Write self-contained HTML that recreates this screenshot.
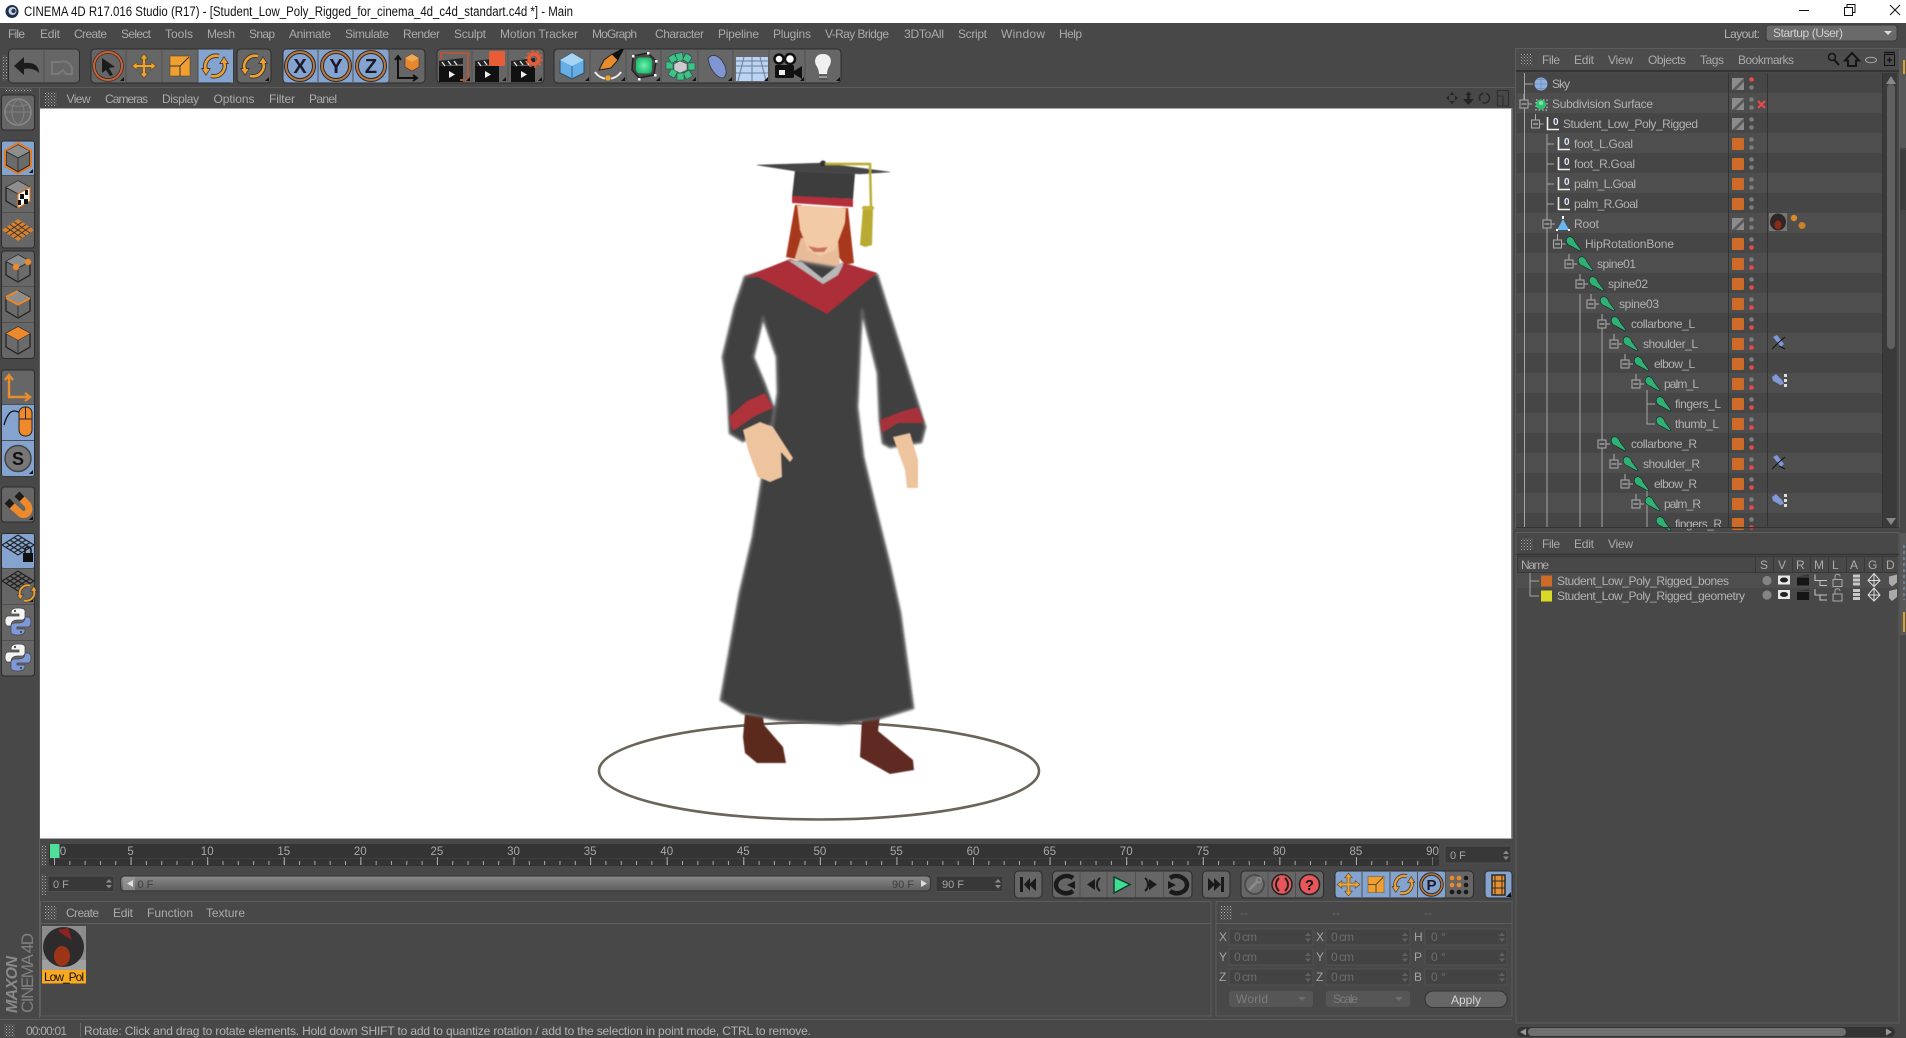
<!DOCTYPE html>
<html><head><meta charset="utf-8"><title>CINEMA 4D</title>
<style>
html,body{margin:0;padding:0;background:#484848;overflow:hidden}
svg{display:block}
text{font-family:"Liberation Sans",sans-serif;font-size:12px;fill:#ababab}
.o{fill:#b2b2b2}
.d{fill:#6c6c6c}
.l{fill:#a4a4a4}
.f{font-size:11px;fill:#a4a4a4}
.r{font-size:11.5px;fill:#a8a8a8}
.n{font-size:10px;font-weight:bold;fill:#dbe8ff}
</style></head><body>
<svg width="1906" height="1038" viewBox="0 0 1906 1038" xmlns="http://www.w3.org/2000/svg">
<defs>
<pattern id="grip" width="3" height="3" patternUnits="userSpaceOnUse"><rect width="3" height="3" fill="#444"/><rect width="1" height="1" fill="#b0b0b0"/><rect x="1.5" y="1.5" width="1" height="1" fill="#999"/></pattern>
<pattern id="rows" width="40" height="40" y="73" patternUnits="userSpaceOnUse"><rect width="40" height="20" fill="#464646"/><rect y="20" width="40" height="20" fill="#4e4e4e"/></pattern>
<g id="mv"><path d="M0-12L4-7H1.5V-1.5H7V-4L12 0L7 4V1.5H1.5V7H4L0 12L-4 7H-1.5V1.5H-7V4L-12 0L-7-4V-1.5H-1.5V-7H-4Z" fill="#f2a52e" stroke="#5a4a2a" stroke-width=".7"/></g>
<g id="sc"><rect x="-10" y="-10" width="20" height="20" fill="#f0a030" stroke="#5a4a2a" stroke-width=".6"/><path d="M-10 0H0V10M0 0L9-9" fill="none" stroke="#333" stroke-width="1"/></g>
<g id="rt"><path d="M4-10C-6-12-12-3-9 4M-4 10C6 12 12 3 9-4" fill="none" stroke="#3a3a3a" stroke-width="4.500"/><path d="M-14 2L-4 2L-9 10ZM14-2L4-2L9-10Z" fill="#3a3a3a"/><path d="M4-10C-6-12-12-3-9 4M-4 10C6 12 12 3 9-4" fill="none" stroke="#f0a030" stroke-width="2.600"/><path d="M-12.500 3L-5.500 3L-9 8.500ZM12.500-3L5.500-3L9-8.500Z" fill="#f0a030"/></g>
<g id="cube"><path d="M0-13L12-6.500V7L0 14L-12 7V-6.500Z" fill="#6b6b6b" stroke="#222" stroke-width="1.300"/><path d="M0-13L12-6.500L0 0L-12-6.500Z" fill="#8e8e8e"/><path d="M0 0V14M0 0L12-6.500M0 0L-12-6.500" stroke="#333" stroke-width="1" fill="none"/></g>
<g id="clap"><rect x="-13" y="-3" width="24" height="16" fill="#111"/><path d="M-13-8L11-11V-5L-13-3Z" fill="#222"/><path d="M-10-7l3 4M-4-8l3 4M2-8l3 4" stroke="#ddd" stroke-width="1.4"/><path d="M-3 2L3 5.500L-3 9Z" fill="#eee"/></g>
<g id="py"><path d="M0-13C-7-13-7-10-7-7H1V-5H-10C-14-5-14 5-10 5H-7C-7 0-3-1 0-1H4C6-1 7-3 7-4V-10C7-12 4-13 0-13Z" fill="#f4f4f4" stroke="#444" stroke-width=".7"/><path d="M0 14C7 14 7 11 7 8H-1V6H10C14 6 14-4 10-4H7C7 1 4 2 0 2H-4C-6 2-7 4-7 5V11C-7 13-4 14 0 14Z" fill="#7f98d8" stroke="#444" stroke-width=".7"/><circle cx="-3" cy="-10" r="1.100" fill="#444"/><circle cx="3" cy="11" r="1.100" fill="#444"/></g>
<g id="grid"><path d="M0-10L16 0L0 10L-16 0Z" fill="none" stroke="#1f1f1f" stroke-width="1.100"/><path d="M-8-5L8 5M-4-7.500L12 2.500M-12-2.500L4 7.500M8-5L-8 5M4-7.500L-12 2.500M12-2.500L-4 7.500" stroke="#1f1f1f" stroke-width="1.100"/></g>
<g id="sqo"><rect width="12" height="12" rx="1" fill="#ce6b28"/></g>
<g id="sqg"><rect width="12" height="12" fill="#8c8c8c"/><path d="M0 12L12 0V4L4 12Z" fill="#5c5c5c"/></g>
<g id="dg"><circle cy="-4.500" r="2.300" fill="#7c7c7c"/><circle cy="3.500" r="2.300" fill="#7c7c7c"/></g>
<g id="dr"><circle cy="-4.500" r="2.300" fill="#7c7c7c"/><circle cy="3.500" r="2.300" fill="#e84a4a"/></g>
<g id="bx"><path d="M0-4V-10M4 0H8M-2.500 0H2.500" stroke="#aeaeae" fill="none"/><rect x="-4" y="-4" width="8" height="8" fill="#4a4a4a" stroke="#aeaeae"/><path d="M-2.500 0H2.500" stroke="#c8c8c8"/></g>
<g id="bn"><path d="M0-6C3-9 7-6 8-2L14 6L13 7L4 2C0 1-2-3 0-6Z" fill="#2fb270" stroke="#123" stroke-width=".6"/></g>
<g id="nl"><path d="M1.500-7V5.500H13" fill="none" stroke="#f0f0f0" stroke-width="1.600"/></g>
<g id="tg"><path d="M1-6L5-8L12 1L9 4Z" fill="#7f98d8"/><path d="M0 6L6 0L13-6M7 3L13 6" stroke="#111" stroke-width="1" fill="none"/></g>
<g id="tp"><path d="M0-5L4-8L10-2L12 2L8 3L5 1L1-1Z" fill="#7f98d8"/><rect x="12" y="-8" width="3" height="3" fill="#ddd"/><rect x="12" y="-3" width="3" height="3" fill="#ddd"/><rect x="12" y="2" width="3" height="3" fill="#ddd"/></g>
<g id="lic"><circle cx="1767" r="4.600" fill="#848484"/><rect x="1778" y="-5" width="12" height="9" fill="#e8e8e8"/><ellipse cx="1784" cy="-.5" rx="4" ry="2.500" fill="#222"/><rect x="1797" y="-3" width="12" height="8" fill="#151515"/><path d="M1797-4l12-2v2h-12z" fill="#333"/><path d="M1815-6V0H1827M1820 0V5H1827" fill="none" stroke="#c4c4c4"/><rect x="1833" y="-1" width="9" height="7" fill="none" stroke="#aaa"/><path d="M1835-1V-4C1835-7 1840-7 1840-4" fill="none" stroke="#aaa"/><path d="M1853-6h7v3h-7zM1853-2h7v3h-7zM1853 2h7v3h-7z" fill="#c8c8c8"/><path d="M1874-7L1880 0L1874 6L1868 0Z" fill="none" stroke="#ddd"/><path d="M1868 0H1880M1874-7V6" stroke="#ddd"/><path d="M1889-4L1897-6V2L1892 6L1889 3Z" fill="#aaa"/></g>
<g id="spin"><path d="M-3-1L0-4.500L3-1ZM-3 1.500L0 5L3 1.500Z" fill="#8a8a8a"/></g>
<g id="spd"><path d="M-3-1L0-4.500L3-1ZM-3 1.500L0 5L3 1.500Z" fill="#626262"/></g>
<filter id="soft" x="-5%" y="-5%" width="110%" height="110%"><feGaussianBlur stdDeviation="1.100"/></filter>
<filter id="soft2" x="-5%" y="-5%" width="110%" height="110%"><feGaussianBlur stdDeviation=".5"/></filter>
<linearGradient id="sl" x1="0" y1="0" x2="0" y2="1"><stop offset="0" stop-color="#8a8a8a"/><stop offset="1" stop-color="#5c5c5c"/></linearGradient>
<radialGradient id="grn"><stop offset="0" stop-color="#6ef0b0"/><stop offset="1" stop-color="#22c070"/></radialGradient>
</defs>

<!-- base -->
<rect width="1906" height="1038" fill="#484848"/>
<rect width="1906" height="23" fill="#fff"/>
<circle cx="12" cy="11.500" r="6.500" fill="#20304a"/><circle cx="12.500" cy="11" r="4" fill="#c8d4e6"/><circle cx="13.500" cy="11" r="2.200" fill="#2a3a56"/>
<text x="24" y="16" textLength="549" lengthAdjust="spacingAndGlyphs" style="font-size:13.500px;fill:#111">CINEMA 4D R17.016 Studio (R17) - [Student_Low_Poly_Rigged_for_cinema_4d_c4d_standart.c4d *] - Main</text>
<path d="M1799 10.500H1809" stroke="#111"/><path d="M1844.500 7.500H1852.500V15.500H1844.500ZM1847 7V4.500H1855V12.500H1853" fill="none" stroke="#111"/><path d="M1890 5L1900 15M1900 5L1890 15" stroke="#111"/>

<!-- menu -->
<g>
<text x="8" y="38" textLength="17">File</text><text x="40" y="38" textLength="20">Edit</text><text x="74" y="38" textLength="33">Create</text><text x="121" y="38" textLength="30">Select</text><text x="165" y="38" textLength="28">Tools</text><text x="207" y="38" textLength="28">Mesh</text><text x="249" y="38" textLength="26">Snap</text><text x="289" y="38" textLength="42">Animate</text><text x="345" y="38" textLength="44">Simulate</text><text x="403" y="38" textLength="37">Render</text><text x="454" y="38" textLength="32">Sculpt</text><text x="500" y="38" textLength="78">Motion Tracker</text><text x="592" y="38" textLength="45">MoGraph</text><text x="655" y="38" textLength="49">Character</text><text x="718" y="38" textLength="41">Pipeline</text><text x="773" y="38" textLength="38">Plugins</text><text x="825" y="38" textLength="64">V-Ray Bridge</text><text x="904" y="38" textLength="40">3DToAll</text><text x="958" y="38" textLength="29">Script</text><text x="1001" y="38" textLength="44">Window</text><text x="1059" y="38" textLength="23">Help</text>
</g>
<text x="1724" y="38" textLength="36" class="o">Layout:</text>
<rect x="1766" y="25" width="131" height="16" rx="3" fill="#6a6a6a" stroke="#3a3a3a"/>
<text x="1773" y="37" textLength="70" style="fill:#d0d0d0">Startup (User)</text>
<path d="M1884 31H1892L1888 35Z" fill="#ddd"/>

<!-- top toolbar -->
<rect x="2" y="55" width="5" height="26" fill="url(#grip)"/>
<g stroke="#2c2c2c" fill="#666">
<rect x="8.500" y="49" width="71" height="34" rx="4"/><rect x="91" y="49" width="142" height="34" rx="4"/><rect x="237" y="49" width="34" height="34" rx="4"/><rect x="283" y="49" width="142" height="34" rx="4"/><rect x="437" y="49" width="107" height="34" rx="4"/><rect x="554" y="49" width="287" height="34" rx="4"/>
</g>
<rect x="198" y="49.500" width="35" height="33" fill="#84a3cf"/>
<rect x="283.500" y="49.500" width="105" height="33" rx="3" fill="#84a3cf"/>
<path d="M44 50V82M126 50V82M162 50V82M198 50V82M318 50V82M353 50V82M389 50V82M472 50V82M508 50V82M590 50V82M626 50V82M661 50V82M698 50V82M733 50V82M769 50V82M805 50V82" stroke="#505050"/>
<path d="M14 66L24 57V63C33 62 39 65 39 73C35 69 30 68 24 69V75Z" fill="#1c1c1c"/>
<g opacity=".55"><path d="M52 74V62H60C64 60 70 62 72 68V74H66L63 70L58 74Z" fill="none" stroke="#8a8a8a" stroke-width="2"/></g>
<circle cx="108" cy="66" r="14" fill="none" stroke="#3a2a22" stroke-width="3.500"/><circle cx="108" cy="66" r="14" fill="none" stroke="#c9623a" stroke-width="2"/>
<path d="M102 58L115 67L109 68L113 75L110 76L106 70L102 73Z" fill="#1c1c1c"/>
<path d="M124 81H120L124 77Z" fill="#111"/>
<use href="#mv" x="144" y="66"/><use href="#sc" x="180" y="66"/><use href="#rt" x="215" y="66"/><use href="#rt" x="254" y="66"/>
<path d="M269 81H265L269 77Z" fill="#111"/>
<g fill="none"><circle cx="300" cy="66" r="14" stroke="#2a2a2a" stroke-width="4"/><circle cx="300" cy="66" r="14" stroke="#b97840" stroke-width="2"/><circle cx="336" cy="66" r="14" stroke="#2a2a2a" stroke-width="4"/><circle cx="336" cy="66" r="14" stroke="#b97840" stroke-width="2"/><circle cx="371" cy="66" r="14" stroke="#2a2a2a" stroke-width="4"/><circle cx="371" cy="66" r="14" stroke="#b97840" stroke-width="2"/></g>
<text x="300" y="73" text-anchor="middle" style="font-size:20px;font-weight:bold;fill:#1a1a2a">X</text><text x="336" y="73" text-anchor="middle" style="font-size:20px;font-weight:bold;fill:#1a1a2a">Y</text><text x="371" y="73" text-anchor="middle" style="font-size:20px;font-weight:bold;fill:#1a1a2a">Z</text>
<path d="M398 56V78H417M395 60L398 56L401 60M413 75L417 78L413 81" fill="none" stroke="#111" stroke-width="2"/>
<path d="M405 58L412 54L419 58V67L412 71L405 67Z" fill="#e8872c" stroke="#333" stroke-width=".6"/><path d="M405 58L412 62L419 58L412 54Z" fill="#f0a850"/>
<use href="#clap" x="452" y="69"/><path d="M441 60V53H468V80H460" fill="none" stroke="#b0563a" stroke-width="2"/>
<use href="#clap" x="488" y="69"/><rect x="489" y="51" width="16" height="15" rx="1.500" fill="#e85d35"/>
<use href="#clap" x="524" y="69"/><circle cx="534" cy="59" r="5" fill="none" stroke="#e85d35" stroke-width="3.500"/><circle cx="534" cy="59" r="8" fill="none" stroke="#e85d35" stroke-width="1.500" stroke-dasharray="2.500 2.500"/>
<path d="M470 81H466L470 77ZM506 81H502L506 77ZM542 81H538L542 77Z" fill="#111"/>
<!-- object row -->
<path d="M572 53L584 60V73L572 79L560 73V60Z" fill="#66aee4" stroke="#2b4a66"/><path d="M572 53L584 60L572 66L560 60Z" fill="#a8d4f4"/><path d="M572 66V79" stroke="#2b6a96"/>
<path d="M595 72C601 81 615 81 621 72" fill="none" stroke="#eee" stroke-width="2"/><circle cx="608" cy="78" r="3" fill="#f0a030" stroke="#555" stroke-width=".5"/>
<path d="M599 70L604 60L612 54L618 60L611 68Z" fill="#e88c2c" stroke="#222"/><path d="M612 54L621 49H624L622 53L618 60Z" fill="#111"/>
<path d="M633 56L648 53L656 61L654 75L639 78L632 70Z" fill="#4a4a4a" stroke="#222" stroke-width="1.500"/><rect x="636" y="57.500" width="16" height="16" rx="4" fill="url(#grn)"/>
<g fill="#fff"><rect x="632" y="55" width="2.500" height="2.500"/><rect x="647" y="52" width="2.500" height="2.500"/><rect x="655" y="60" width="2.500" height="2.500"/><rect x="654" y="74" width="2.500" height="2.500"/><rect x="638" y="78" width="2.500" height="2.500"/></g>
<g fill="#3ec480" stroke="#145" stroke-width=".5"><rect x="676" y="53" width="7" height="8" transform="rotate(-10 680 57)"/><rect x="684" y="55" width="7" height="7" transform="rotate(30 688 58)"/><rect x="688" y="63" width="7" height="7"/><rect x="684" y="71" width="7" height="7" transform="rotate(-30 688 74)"/><rect x="677" y="73" width="7" height="7"/><rect x="669" y="70" width="7" height="7" transform="rotate(30 673 74)"/><rect x="666" y="62" width="7" height="7"/><rect x="669" y="55" width="7" height="7" transform="rotate(-30 673 58)"/></g><path d="M680 61L687 64V70L680 73L674 70V64Z" fill="#ccc" stroke="#555" stroke-width=".6"/>
<path d="M708 59C712 52 720 56 724 64C727 70 727 76 723 78C717 78 713 72 710 66Z" fill="#8095d4" stroke="#333" stroke-width=".8"/>
<rect x="736" y="57" width="32" height="24" fill="#bcd4f4"/><path d="M736 61H768M736 66H768M736 73H768M744 57L738 81M752 57V81M760 57L766 81" stroke="#6c7e92"/>
<circle cx="779" cy="59" r="4.500" fill="#fff" stroke="#111" stroke-width="2.500"/><circle cx="790" cy="59" r="5" fill="#fff" stroke="#111" stroke-width="2.500"/><rect x="775" y="65" width="19" height="13" rx="1.500" fill="#111"/><path d="M794 71L802 66V79L794 74Z" fill="#111"/><rect x="779" y="70" width="6" height="5" fill="#eee"/>
<path d="M823 54C815 54 814 61 816 65C818 68 819 71 819 74H827C827 71 828 68 830 65C832 61 831 54 823 54Z" fill="#f0f0f0"/><path d="M819 75H827V80H819Z" fill="#555"/><path d="M819 77H827" stroke="#ddd"/>
<path d="M589 81H585L589 77ZM625 81H621L625 77ZM660 81H656L660 77ZM696 81H692L696 77ZM732 81H728L732 77ZM768 81H764L768 77ZM804 81H800L804 77ZM840 81H836L840 77Z" fill="#111"/>

<path d="M0 87.500H1515" stroke="#5c5c5c"/>
<!-- left toolbar -->
<rect x="5" y="88" width="27" height="4" fill="url(#grip)"/>
<path d="M39.500 88V1018" stroke="#606060"/>
<g stroke="#2c2c2c" fill="#666"><rect x="1.500" y="95" width="33" height="35" rx="3"/><rect x="1.500" y="141" width="33" height="107" rx="3"/><rect x="1.500" y="251" width="33" height="107.500" rx="3"/><rect x="1.500" y="370" width="33" height="106" rx="3"/><rect x="1.500" y="487" width="33" height="35" rx="3"/><rect x="1.500" y="533.500" width="33" height="142.500" rx="3"/></g>
<rect x="2" y="141.500" width="32" height="34" rx="2" fill="#84a3cf"/><rect x="2" y="404" width="32" height="72" rx="2" fill="#84a3cf"/><rect x="2" y="534" width="32" height="34" rx="2" fill="#84a3cf"/>
<path d="M2 175.500H34M2 212.500H34M2 286.500H34M2 322.500H34M2 404.500H34M2 440.500H34M2 568.500H34M2 604.500H34M2 640.500H34" stroke="#505050"/>
<circle cx="18" cy="112" r="13" fill="none" stroke="#888" stroke-width="1.500"/><path d="M18 99C10 105 10 119 18 125C26 119 26 105 18 99M5 112H31M8 104C14 107 22 107 28 104" fill="none" stroke="#808080"/>
<use href="#cube" x="18" y="158"/><path d="M18 143L31 150.500V166L18 173.500L5 166V150.500Z" fill="none" stroke="#e07c28" stroke-width="2"/>
<use href="#cube" x="18" y="194"/><path d="M18 194L30 187.500V201L18 208Z" fill="#fff" stroke="#e07c28" stroke-width="1.200"/><path d="M20 194h4v5h-4zM24 199h4v5h-4zM18 200h3v5h-3zM25 190h3v5h-3z" fill="#111"/>
<path d="M18 219L34 230L18 241L2 230Z" fill="#d68130"/><path d="M10 224.500L26 235.500M14 222L30 233M6 227L22 238M26 224.500L10 235.500M22 222L6 233M30 227L14 238" stroke="#333" stroke-width=".8"/>
<use href="#cube" x="18" y="268"/><circle cx="16" cy="267" r="3.200" fill="#ee8a2c"/><circle cx="28" cy="262" r="3.200" fill="#ee8a2c"/>
<use href="#cube" x="18" y="304"/><path d="M6 298L18 304.500L30 298M6 297L18 291" fill="none" stroke="#ee8a2c" stroke-width="2"/>
<use href="#cube" x="18" y="340"/><path d="M18 327L30 333.500L18 340L6 333.500Z" fill="#ee8a2c"/>
<path d="M9 376V397H28M5 380L9 375L13 380M25 393L30 397L25 401" fill="none" stroke="#e88c2c" stroke-width="2.400"/>
<path d="M4 425C9 407 16 410 22 414" fill="none" stroke="#111" stroke-width="1.300"/><rect x="19" y="407" width="13" height="29" rx="6" fill="#ee8a2c" stroke="#222"/><path d="M19 419H32M25.500 407V419" stroke="#222"/>
<circle cx="18" cy="458.500" r="13" fill="#777" stroke="#444" stroke-width="1.500"/><text x="18" y="465" text-anchor="middle" style="font-size:18px;font-weight:bold;fill:#111">S</text>
<path d="M9 503L20 513C26 518 32 510 27 504L19 496" fill="none" stroke="#ee8a2c" stroke-width="7"/><path d="M7 501L12 506M17 494L22 499" stroke="#1c1c1c" stroke-width="7"/>
<path d="M33 520H29L33 516ZM33 173H29L33 169ZM33 474H29L33 470ZM33 602H29L33 598Z" fill="#111"/>
<use href="#grid" x="18" y="545"/><rect x="23" y="553" width="10" height="9" fill="#111"/><path d="M25 553V550C25 546 31 546 31 550V553" fill="none" stroke="#111" stroke-width="1.500"/>
<use href="#grid" x="18" y="581"/><use href="#rt" transform="translate(27 593) scale(.75)"/>
<use href="#py" x="18" y="621"/><use href="#py" x="18" y="657"/>

<!-- view menu -->
<rect x="45" y="92" width="12" height="14" fill="url(#grip)"/>
<g><text x="66.500" y="103" textLength="24">View</text><text x="105" y="103" textLength="43">Cameras</text><text x="162" y="103" textLength="37">Display</text><text x="213.500" y="103" textLength="41">Options</text><text x="269" y="103" textLength="26">Filter</text><text x="309" y="103" textLength="28">Panel</text></g>
<path d="M1446 98L1449 95.500V100.500ZM1458 98L1455 95.500V100.500ZM1452 92L1449.500 95H1454.500ZM1452 104L1449.500 101H1454.500Z" fill="#242424"/>
<path d="M1468.500 94V100" stroke="#242424" stroke-width="2.500"/><path d="M1468.500 91.500L1465.500 95H1471.500ZM1463 99H1474L1468.500 105Z" fill="#242424"/>
<circle cx="1484.500" cy="98" r="5" fill="none" stroke="#2a2a2a" stroke-width="1.600" stroke-dasharray="10 2.500"/>
<path d="M1497.500 90.500H1508.500V106H1497.500ZM1497.500 96H1503V106" fill="none" stroke="#2e2e2e" stroke-width="1.100"/>

<!-- viewport -->
<path d="M40 108.500H1511" stroke="#a8a8a8"/>
<rect x="40" y="109" width="1471" height="729" fill="#fff"/>
<rect x="40" y="838" width="1471" height="1" fill="#a8a8a8"/>
<rect x="1511" y="108" width="1.500" height="731" fill="#8a8a8a"/>

<!-- figure -->
<ellipse cx="819" cy="771" rx="220" ry="48.500" fill="#fff" stroke="#6b6459" stroke-width="2.600"/>
<g filter="url(#soft2)">
<path d="M745 714L763 716L764 725L783 747L786 763L757 763L745 753L743 737Z" fill="#5c2a1f"/>
<path d="M862 718L880 716L878 731L913 760L914 770L890 774L860 757Z" fill="#5e2c21"/>
<path d="M795 205L786 257L800 260L806 240L801 205Z" fill="#a8391c"/>
<path d="M842 208L848 208L854 263L845 265L833 250Z" fill="#a8391c"/>
<path d="M801 238L838 242L840 266L820 276L795 258Z" fill="#e8bc98"/>
</g>
<!-- gown: one merged silhouette -->
<g filter="url(#soft)">
<path d="M745 277L735 307L723 357L728 393L730 433L743 441L772 424L774 410L764 383L753 357L763 317L777 357L778 393L772 430L762 480L753 537L740 593L721 700L743 713L780 720L840 724L880 718L913 708L900 613L890 567L875 507L863 457L857 407L860 340L862 310L878 373L880 420L883 443L890 447L921 442L925 427L903 357L887 307L877 275L800 262Z" fill="#404040" stroke="#5e5e5e" stroke-width="2.600" stroke-linejoin="round"/>
</g>
<g filter="url(#soft2)">
<path d="M729 417L747 401L765 393L773 408L755 416L733 431Z" fill="#b0303a"/>
<path d="M880 420L900 412L918 407L924 423L898 423L882 433Z" fill="#a8303a"/>
<path d="M743 430L760 422L773 427L793 458L790 462L781 452L782 477L770 482L758 477L748 450Z" fill="#eec49e"/>
<path d="M893 437L910 433L918 460L918 488L907 488L905 470Z" fill="#eec49e"/>
<path d="M745 277L790 259L800 262L823 283L843 263L848 264L877 273L827 314L770 283L758 277Z" fill="#ac2f38"/>
<path d="M788 260L802 262L822 278L842 262L843 265L838 275L823 284Z" fill="#b8b8b8"/>
<path d="M797 205L846 208L845 223L835 250L820 256L808 250L800 230Z" fill="#f2caa6"/>
<path d="M808 246L818 248L828 247L824 252L814 252Z" fill="#c9705e"/>
<path d="M795 170L855 173L853 199L792 197Z" fill="#3c3c3c"/>
<path d="M757 165L823 163L890 172L860 174L795 171Z" fill="#454545" stroke="#555" stroke-width=".6"/>
<circle cx="823" cy="163.500" r="3" fill="#333"/>
<path d="M792 196L853 199L853 207L792 203Z" fill="#b42f3a"/>
<path d="M825 164H870L871 207" fill="none" stroke="#b7aa2e" stroke-width="2.400"/>
<path d="M863 207L873 208L872 245L865 247L860 245Z" fill="#b8aa30"/>
<rect x="862" y="206" width="12" height="4" rx="2" fill="#c2b43a"/>
</g>

<!-- timeline -->
<rect x="40" y="840" width="1472" height="60" fill="#484848"/>
<rect x="41" y="845" width="5" height="21" fill="url(#grip)"/>
<rect x="49" y="844" width="1390" height="22" rx="2" fill="#343434"/>
<path d="M49 858.500H1439" stroke="#3e3e3e"/>
<path d="M54 863H1433" stroke="#aaa" stroke-width="4" stroke-dasharray="1 14.317" fill="none"/>
<path d="M54 861H1433" stroke="#aaa" stroke-width="8" stroke-dasharray="1 75.585" fill="none"/>
<rect x="50" y="844" width="9.500" height="14" fill="#4fe09a"/>
<g text-anchor="middle"><text class="r" x="63" y="855">0</text><text class="r" x="130.600" y="855">5</text><text class="r" x="207.200" y="855">10</text><text class="r" x="283.800" y="855">15</text><text class="r" x="360.300" y="855">20</text><text class="r" x="436.900" y="855">25</text><text class="r" x="513.500" y="855">30</text><text class="r" x="590.100" y="855">35</text><text class="r" x="666.700" y="855">40</text><text class="r" x="743.300" y="855">45</text><text class="r" x="819.900" y="855">50</text><text class="r" x="896.400" y="855">55</text><text class="r" x="973" y="855">60</text><text class="r" x="1049.600" y="855">65</text><text class="r" x="1126.200" y="855">70</text><text class="r" x="1202.800" y="855">75</text><text class="r" x="1279.400" y="855">80</text><text class="r" x="1355.900" y="855">85</text><text class="r" x="1432.500" y="855">90</text></g>
<rect x="1445" y="846" width="66" height="17" fill="#383838" stroke="#505050"/><text x="1450" y="859" class="f">0 F</text><use href="#spin" x="1506" y="855"/>
<rect x="41" y="874" width="5" height="21" fill="url(#grip)"/>
<rect x="48" y="876" width="66" height="15.500" rx="1" fill="#383838" stroke="#505050"/><text x="53" y="888" class="f">0 F</text><use href="#spin" x="109" y="883.500"/>
<rect x="120.500" y="876" width="810" height="15" rx="4" fill="url(#sl)" stroke="#333"/>
<rect x="123" y="877" width="12" height="13" fill="#a0a0a0" opacity=".6"/><path d="M133 880L127 883.500L133 887Z" fill="#e0e0e0"/>
<text x="137.500" y="888" style="font-size:11px;fill:#3e3e3e">0 F</text>
<text x="892" y="888" style="font-size:11px;fill:#3e3e3e">90 F</text><path d="M921 880L927 883.500L921 887Z" fill="#ddd"/>
<rect x="936" y="876" width="67" height="15.500" rx="1" fill="#383838" stroke="#505050"/><text x="942" y="888" class="f">90 F</text><use href="#spin" x="998" y="883.500"/>

<g stroke="#2c2c2c" fill="#666"><rect x="1014.500" y="871" width="27.500" height="27" rx="4"/><rect x="1052.500" y="871" width="139.500" height="27" rx="4"/><rect x="1202.500" y="871" width="27.500" height="27" rx="4"/><rect x="1241" y="871" width="82.500" height="27" rx="4"/><rect x="1335" y="871" width="138.500" height="27" rx="4"/><rect x="1485" y="871" width="27" height="27" rx="4"/></g>
<rect x="1335.500" y="871.500" width="110" height="26" rx="3" fill="#84a3cf"/><rect x="1485.500" y="871.500" width="26" height="26" rx="3" fill="#84a3cf"/>
<path d="M1080 872V897M1107 872V897M1135.500 872V897M1163.500 872V897M1268 872V897M1295.500 872V897M1362 872V897M1390 872V897M1417.500 872V897M1445.500 872V897" stroke="#505050"/>
<path d="M1020 877V892H1023V877ZM1024 884.500L1030 878V891ZM1029 884.500L1036 878V891Z" fill="#1a1a1a"/>
<path d="M1073 878C1066 873 1056 878 1056 885C1056 892 1066 896 1073 891" fill="none" stroke="#1a1a1a" stroke-width="4.500"/><path d="M1075 881L1067 885L1075 889Z" fill="#1a1a1a"/>
<path d="M1100 878C1096 881 1096 888 1100 891" fill="none" stroke="#1a1a1a" stroke-width="2"/><path d="M1087 884.500L1095 879V890Z" fill="#1a1a1a"/>
<path d="M1114 877L1130 884.500L1114 893Z" fill="#3fe094" stroke="#0f3a28" stroke-width="1.400"/>
<path d="M1145 878C1149 881 1149 888 1145 891" fill="none" stroke="#1a1a1a" stroke-width="2"/><path d="M1149 879L1157 884.500L1149 890Z" fill="#1a1a1a"/>
<path d="M1170 878C1177 873 1187 878 1187 885C1187 892 1177 896 1170 891" fill="none" stroke="#1a1a1a" stroke-width="4.500"/><path d="M1168 881L1176 885L1168 889Z" fill="#1a1a1a"/>
<path d="M1208 878L1215 884.500L1208 891ZM1214 878L1221 884.500L1214 891ZM1221 877H1224V892H1221Z" fill="#1a1a1a"/>
<circle cx="1254.500" cy="884.500" r="9.500" fill="#707070" stroke="#4c4c4c" stroke-width="2"/><path d="M1249 890L1258 881" stroke="#8c8c8c" stroke-width="2.500"/><circle cx="1259" cy="880" r="2.500" fill="none" stroke="#8c8c8c" stroke-width="1.500"/>
<circle cx="1282" cy="884.500" r="10" fill="#e8555a" stroke="#222" stroke-width="1.500"/><path d="M1279 878C1275 882 1275 887 1279 891M1285 878C1289 882 1289 887 1285 891" fill="none" stroke="#222" stroke-width="2"/>
<circle cx="1309.500" cy="884.500" r="10" fill="#e8555a" stroke="#222" stroke-width="1.500"/><text x="1309.500" y="890" text-anchor="middle" style="font-size:15px;font-weight:bold;fill:#111">?</text>
<use href="#mv" transform="translate(1348.500 884.500) scale(.95)"/><use href="#sc" transform="translate(1376 884.500) scale(.8)"/><use href="#rt" transform="translate(1403.500 884.500) scale(.85)"/>
<circle cx="1431.500" cy="884.500" r="10.500" fill="none" stroke="#2a2a2a" stroke-width="3.500"/><circle cx="1431.500" cy="884.500" r="10.500" fill="none" stroke="#b97840" stroke-width="1.600"/><text x="1431.500" y="890" text-anchor="middle" style="font-size:15px;font-weight:bold;fill:#1a1a2a">P</text>
<g fill="#1a1a1a"><circle cx="1452" cy="878" r="2.300" fill="#ee8a2c"/><circle cx="1452" cy="885" r="2.300" fill="#ee8a2c"/><circle cx="1452" cy="892" r="2.300"/><circle cx="1459" cy="878" r="2.300" fill="#ee8a2c"/><circle cx="1459" cy="885" r="2.300" fill="#ee8a2c"/><circle cx="1459" cy="892" r="2.300"/><circle cx="1466" cy="878" r="2.300"/><circle cx="1466" cy="885" r="2.300"/><circle cx="1466" cy="892" r="2.300"/></g>
<rect x="1492" y="875" width="13" height="20" fill="#e89030" stroke="#2a2a2a" stroke-width="1.500"/><path d="M1492 881H1505M1492 888H1505M1495 875V895M1502 875V895" stroke="#2a2a2a"/>
<path d="M1511 897H1506L1511 892Z" fill="#111"/>

<!-- material panel -->
<rect x="40.500" y="901.500" width="1170.500" height="114.500" fill="#484848" stroke="#5c5c5c"/>
<path d="M41 923.500H1211" stroke="#5e5e5e"/>
<rect x="45" y="906" width="12" height="14" fill="url(#grip)"/>
<text x="66" y="917" textLength="33">Create</text><text x="113" y="917" textLength="20">Edit</text><text x="147" y="917" textLength="46">Function</text><text x="206" y="917" textLength="39">Texture</text>
<rect x="42" y="926" width="44" height="44" fill="#8c8c8c"/><path d="M42 960H86V970H42Z" fill="#a0a0a0"/>
<ellipse cx="63.500" cy="947" rx="20.500" ry="20" fill="#2e2b2c"/><ellipse cx="62" cy="956" rx="8" ry="10" fill="#9c3518"/><path d="M58 930L68 928L72 940L62 934Z" fill="#8c2420"/>
<rect x="42" y="970" width="44" height="13.500" fill="#f8a91e"/>
<text x="44" y="981" textLength="40" style="fill:#111">Low_Pol</text>
<text transform="translate(17 1013) rotate(-90)" textLength="57" style="font-size:16px;font-weight:bold;font-style:italic;fill:#8a8a8a">MAXON</text>
<text transform="translate(33 1013) rotate(-90)" textLength="80" style="font-size:17px;fill:#808080">CINEMA 4D</text>

<!-- coords -->
<rect x="1216" y="901.500" width="296" height="114.500" fill="#484848" stroke="#5c5c5c"/>
<path d="M1216 923.500H1512" stroke="#5e5e5e"/>
<rect x="1220" y="906" width="12" height="14" fill="url(#grip)"/>
<text x="1240" y="917" class="d">--</text><text x="1332" y="917" class="d">--</text><text x="1424" y="917" class="d">--</text>
<g fill="#434343" stroke="#525252"><rect x="1229" y="929" width="84" height="16"/><rect x="1326" y="929" width="84" height="16"/><rect x="1425" y="929" width="82" height="16"/><rect x="1229" y="949" width="84" height="16"/><rect x="1326" y="949" width="84" height="16"/><rect x="1425" y="949" width="82" height="16"/><rect x="1229" y="969" width="84" height="16"/><rect x="1326" y="969" width="84" height="16"/><rect x="1425" y="969" width="82" height="16"/></g>
<text x="1219" y="941" class="l">X</text><text x="1316" y="941" class="l">X</text><text x="1414" y="941" class="l">H</text><text x="1219" y="961" class="l">Y</text><text x="1316" y="961" class="l">Y</text><text x="1414" y="961" class="l">P</text><text x="1219" y="981" class="l">Z</text><text x="1316" y="981" class="l">Z</text><text x="1414" y="981" class="l">B</text>
<text x="1234" y="941" class="d" textLength="23">0 cm</text><text x="1331" y="941" class="d" textLength="23">0 cm</text><text x="1431" y="941" class="d">0 °</text><text x="1234" y="961" class="d" textLength="23">0 cm</text><text x="1331" y="961" class="d" textLength="23">0 cm</text><text x="1431" y="961" class="d">0 °</text><text x="1234" y="981" class="d" textLength="23">0 cm</text><text x="1331" y="981" class="d" textLength="23">0 cm</text><text x="1431" y="981" class="d">0 °</text>
<use href="#spd" x="1308" y="937"/><use href="#spd" x="1405" y="937"/><use href="#spd" x="1502" y="937"/><use href="#spd" x="1308" y="957"/><use href="#spd" x="1405" y="957"/><use href="#spd" x="1502" y="957"/><use href="#spd" x="1308" y="977"/><use href="#spd" x="1405" y="977"/><use href="#spd" x="1502" y="977"/>
<rect x="1229" y="991" width="84" height="16" rx="3" fill="#565656"/><rect x="1326" y="991" width="84" height="16" rx="3" fill="#565656"/>
<text x="1236" y="1003" textLength="32" style="fill:#7c7c7c">World</text><text x="1333" y="1003" textLength="25" style="fill:#7c7c7c">Scale</text>
<path d="M1298 997H1306L1302 1001ZM1395 997H1403L1399 1001Z" fill="#6c6c6c"/>
<rect x="1425" y="991" width="82" height="16.500" rx="8" fill="#666" stroke="#333"/><text x="1466" y="1004" text-anchor="middle" textLength="30" style="fill:#d4d4d4">Apply</text>

<!-- status -->
<path d="M0 1019.500H1512" stroke="#5c5c5c"/>
<rect x="4" y="1024" width="11" height="13" fill="url(#grip)"/>
<text x="26" y="1035" textLength="41">00:00:01</text>
<path d="M80.500 1023V1037" stroke="#666"/>
<text x="84" y="1035" textLength="727" style="fill:#b4b4b4">Rotate: Click and drag to rotate elements. Hold down SHIFT to add to quantize rotation / add to the selection in point mode, CTRL to remove.</text>

<!-- object manager -->
<rect x="1515.500" y="48.500" width="384" height="480" fill="#484848" stroke="#5c5c5c"/>
<rect x="1516" y="49" width="383" height="21" fill="#4c4c4c"/>
<path d="M1516 71H1899" stroke="#343434" stroke-width="2"/>
<rect x="1521" y="54" width="12" height="12" fill="url(#grip)"/>
<text x="1542" y="64" textLength="18">File</text><text x="1574" y="64" textLength="20">Edit</text><text x="1608" y="64" textLength="25">View</text><text x="1648" y="64" textLength="38">Objects</text><text x="1700" y="64" textLength="24">Tags</text><text x="1738" y="64" textLength="56">Bookmarks</text>
<circle cx="1832" cy="57" r="3.500" fill="none" stroke="#111" stroke-width="1.400"/><path d="M1834.500 60L1839 65" stroke="#111" stroke-width="2"/>
<path d="M1852 53L1859 60.500H1856V66H1848V60.500H1845Z" fill="none" stroke="#111" stroke-width="1.800"/>
<ellipse cx="1871" cy="60" rx="5.500" ry="2.800" fill="none" stroke="#aaa"/>
<rect x="1884.500" y="54.500" width="10" height="11" fill="none" stroke="#111"/><path d="M1884 52.500H1895M1887 60H1892M1889.500 57.500V62.500" stroke="#111" stroke-width="1.300"/>
<rect x="1517" y="73" width="365" height="454" fill="url(#rows)"/>
<path d="M1728.500 73V527M1767.500 73V527" stroke="#333"/>
<path d="M1882.500 73V527" stroke="#333"/>
<rect x="1883" y="73" width="14" height="454" fill="#3a3a3a"/>
<rect x="1887" y="84" width="8" height="265" rx="4" fill="#606060"/>
<path d="M1891 76L1886 84H1896Z" fill="#888"/><path d="M1891 525L1886 518H1896Z" fill="#888"/>
<!-- tree lines -->
<path d="M1524.500 73V527M1547 134V527M1580 294V527M1602 314V527M1647 390V424H1655M1647 404H1655M1647 490V527M1647 504H1655M1524 84H1533M1547 144H1554M1547 164H1554M1547 184H1554M1547 204H1554" stroke="#a6a6a6" fill="none"/>
<use href="#bx" x="1524" y="104"/><use href="#bx" x="1535.500" y="124"/><use href="#bx" x="1547" y="224"/><use href="#bx" x="1557.500" y="244"/><use href="#bx" x="1569" y="264"/><use href="#bx" x="1580" y="284"/><use href="#bx" x="1591" y="304"/><use href="#bx" x="1602" y="324"/><use href="#bx" x="1614" y="344"/><use href="#bx" x="1625" y="364"/><use href="#bx" x="1636" y="384"/><use href="#bx" x="1602" y="444"/><use href="#bx" x="1614" y="464"/><use href="#bx" x="1625" y="484"/><use href="#bx" x="1636" y="504"/>
<!-- obj icons -->
<circle cx="1541" cy="84" r="6.500" fill="#8db0de"/><path d="M1534.500 84H1547.500M1541 77.500V90.500M1536 79.500H1546M1536 88.500H1546" stroke="#6d8cb8" stroke-width=".7"/>
<path d="M1536 100H1547V110H1536Z" fill="none" stroke="#ddd" stroke-dasharray="1.500 2"/><circle cx="1541" cy="104.500" r="5" fill="#2fc074"/><circle cx="1541" cy="103" r="2" fill="#7ae6b0"/>
<use href="#nl" x="1546" y="124"/><text x="1553" y="125" class="n">0</text>
<use href="#nl" x="1557" y="144"/><text x="1564" y="145" class="n">0</text>
<use href="#nl" x="1557" y="164"/><text x="1564" y="165" class="n">0</text>
<use href="#nl" x="1557" y="184"/><text x="1564" y="185" class="n">0</text>
<use href="#nl" x="1557" y="204"/><text x="1564" y="205" class="n">0</text>
<path d="M1557 230L1563 219L1569 230Z" fill="#6ab4f0"/><path d="M1563 216V219" stroke="#fff" stroke-width="2"/><path d="M1556 230h2M1568 230h2" stroke="#fff" stroke-width="2"/>
<use href="#bn" x="1567" y="244"/><use href="#bn" x="1579" y="264"/><use href="#bn" x="1590" y="284"/><use href="#bn" x="1601" y="304"/><use href="#bn" x="1612" y="324"/><use href="#bn" x="1624" y="344"/><use href="#bn" x="1635" y="364"/><use href="#bn" x="1646" y="384"/><use href="#bn" x="1657" y="404"/><use href="#bn" x="1657" y="424"/><use href="#bn" x="1612" y="444"/><use href="#bn" x="1624" y="464"/><use href="#bn" x="1635" y="484"/><use href="#bn" x="1646" y="504"/><use href="#bn" x="1657" y="524"/>
<!-- obj names -->
<g>
<text class="o" x="1552" y="88" textLength="18">Sky</text>
<text class="o" x="1552" y="108" textLength="101">Subdivision Surface</text>
<text class="o" x="1563" y="128" textLength="135">Student_Low_Poly_Rigged</text>
<text class="o" x="1574" y="148" textLength="59">foot_L.Goal</text>
<text class="o" x="1574" y="168" textLength="61">foot_R.Goal</text>
<text class="o" x="1574" y="188" textLength="62">palm_L.Goal</text>
<text class="o" x="1574" y="208" textLength="64">palm_R.Goal</text>
<text class="o" x="1574" y="228" textLength="25">Root</text>
<text class="o" x="1585" y="248" textLength="89">HipRotationBone</text>
<text class="o" x="1597" y="268" textLength="39">spine01</text>
<text class="o" x="1608" y="288" textLength="40">spine02</text>
<text class="o" x="1619" y="308" textLength="40">spine03</text>
<text class="o" x="1631" y="328" textLength="64">collarbone_L</text>
<text class="o" x="1643" y="348" textLength="55">shoulder_L</text>
<text class="o" x="1654" y="368" textLength="41">elbow_L</text>
<text class="o" x="1664" y="388" textLength="35">palm_L</text>
<text class="o" x="1675" y="408" textLength="46">fingers_L</text>
<text class="o" x="1675" y="428" textLength="44">thumb_L</text>
<text class="o" x="1631" y="448" textLength="66">collarbone_R</text>
<text class="o" x="1643" y="468" textLength="57">shoulder_R</text>
<text class="o" x="1654" y="488" textLength="43">elbow_R</text>
<text class="o" x="1664" y="508" textLength="37">palm_R</text>
<text class="o" x="1675" y="528" textLength="47">fingers_R</text>
</g>
<!-- layer squares/dots -->
<use href="#sqg" x="1732" y="78"/><use href="#sqg" x="1732" y="98"/><use href="#sqg" x="1732" y="118"/><use href="#sqo" x="1732" y="138"/><use href="#sqo" x="1732" y="158"/><use href="#sqo" x="1732" y="178"/><use href="#sqo" x="1732" y="198"/><use href="#sqg" x="1732" y="218"/><use href="#sqo" x="1732" y="238"/><use href="#sqo" x="1732" y="258"/><use href="#sqo" x="1732" y="278"/><use href="#sqo" x="1732" y="298"/><use href="#sqo" x="1732" y="318"/><use href="#sqo" x="1732" y="338"/><use href="#sqo" x="1732" y="358"/><use href="#sqo" x="1732" y="378"/><use href="#sqo" x="1732" y="398"/><use href="#sqo" x="1732" y="418"/><use href="#sqo" x="1732" y="438"/><use href="#sqo" x="1732" y="458"/><use href="#sqo" x="1732" y="478"/><use href="#sqo" x="1732" y="498"/><use href="#sqo" x="1732" y="518"/>
<circle cx="1751.500" cy="79.500" r="2.300" fill="#e84a4a"/><circle cx="1751.500" cy="87.500" r="2.300" fill="#7c7c7c"/>
<use href="#dg" x="1751.500" y="104"/><use href="#dg" x="1751.500" y="124"/><use href="#dg" x="1751.500" y="144"/><use href="#dg" x="1751.500" y="164"/><use href="#dg" x="1751.500" y="184"/><use href="#dg" x="1751.500" y="204"/><use href="#dg" x="1751.500" y="224"/>
<use href="#dr" x="1751.500" y="244"/><use href="#dr" x="1751.500" y="264"/><use href="#dr" x="1751.500" y="284"/><use href="#dr" x="1751.500" y="304"/><use href="#dr" x="1751.500" y="324"/><use href="#dr" x="1751.500" y="344"/><use href="#dr" x="1751.500" y="364"/><use href="#dr" x="1751.500" y="384"/><use href="#dr" x="1751.500" y="404"/><use href="#dr" x="1751.500" y="424"/><use href="#dr" x="1751.500" y="444"/><use href="#dr" x="1751.500" y="464"/><use href="#dr" x="1751.500" y="484"/><use href="#dr" x="1751.500" y="504"/><use href="#dr" x="1751.500" y="524"/>
<path d="M1758 101L1765 108M1765 101L1758 108" stroke="#e84a4a" stroke-width="2.200"/>
<!-- tags -->
<rect x="1769" y="213" width="18" height="18" fill="#777"/><ellipse cx="1778" cy="222" rx="8" ry="8.500" fill="#2e2726"/><ellipse cx="1778" cy="225" rx="3.500" ry="4.500" fill="#8c2c18"/>
<circle cx="1794" cy="218" r="3.200" fill="#d88a2a"/><circle cx="1802" cy="225.500" r="3.500" fill="#cc8028"/>
<use href="#tg" x="1772" y="343"/><use href="#tp" x="1772" y="382"/><use href="#tg" x="1772" y="463"/><use href="#tp" x="1772" y="502"/>
<rect x="1516" y="527" width="383" height="1.500" fill="#333"/>

<!-- layer manager -->
<rect x="1516" y="532.500" width="383" height="490.500" fill="#484848" stroke="#5c5c5c"/>
<path d="M1516 554.500H1899" stroke="#343434" stroke-width="1.500"/>
<rect x="1521" y="538" width="12" height="12" fill="url(#grip)"/>
<text x="1542" y="548" textLength="18">File</text><text x="1574" y="548" textLength="20">Edit</text><text x="1608" y="548" textLength="25">View</text>
<path d="M1517 556.500H1897M1517 572.500H1897M1517.500 556V572M1755.500 556V572M1773.500 556V572M1792.500 556V572M1810.500 556V572M1828.500 556V572M1846.500 556V572M1864.500 556V572M1882.500 556V572" stroke="#383838" fill="none"/>
<text x="1521" y="569" textLength="28">Name</text>
<text x="1760" y="569">S</text><text x="1778" y="569">V</text><text x="1796" y="569">R</text><text x="1814" y="569">M</text><text x="1832" y="569">L</text><text x="1850" y="569">A</text><text x="1868" y="569">G</text><text x="1886" y="569">D</text>
<rect x="1517" y="573" width="380" height="15" fill="#4e4e4e"/>
<path d="M1530 573V596H1539M1530 581H1539" stroke="#a6a6a6" fill="none"/>
<rect x="1541" y="575.500" width="11" height="11" fill="#ce6b28"/><rect x="1541" y="590.500" width="11" height="11" fill="#dada26"/>
<text x="1557" y="585" textLength="172" class="o">Student_Low_Poly_Rigged_bones</text>
<text x="1557" y="600" textLength="188" class="o">Student_Low_Poly_Rigged_geometry</text>
<use href="#lic" y="580.500"/><use href="#lic" y="595"/>
<!-- bottom scrollbar -->
<rect x="1517" y="1027" width="378" height="10" rx="5" fill="#333"/>
<rect x="1528" y="1028" width="318" height="8" rx="4" fill="#707070"/>
<path d="M1526 1028.500L1520 1032L1526 1035.500Z" fill="#999"/><path d="M1886 1028.500L1892 1032L1886 1035.500Z" fill="#999"/>
<!-- right sliver -->
<rect x="1900" y="48" width="6" height="100" fill="#585858"/><rect x="1900" y="150" width="6" height="60" fill="#3c3c3c"/><rect x="1900" y="533" width="6" height="102" fill="#585858"/>
<path d="M1904 60V74M1904 612V632" stroke="#d8a030" stroke-width="2"/><path d="M1904 545V600" stroke="#6c7e92" stroke-width="2" stroke-dasharray="3 3"/>
</svg>
</body></html>
